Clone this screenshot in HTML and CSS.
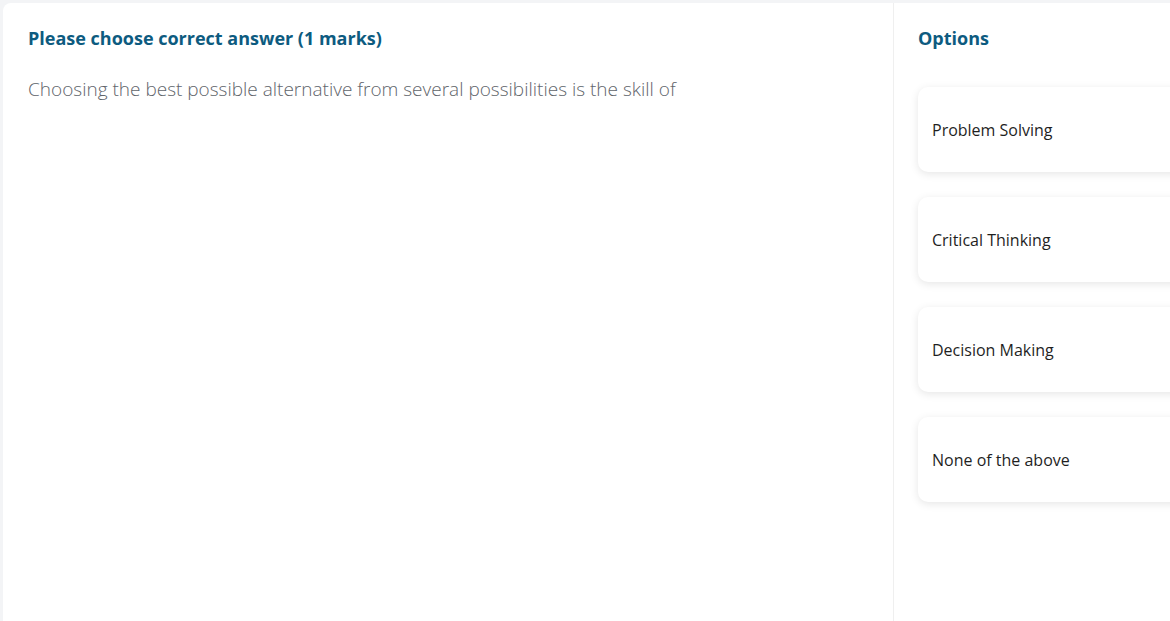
FILE: index.html
```html
<!doctype html>
<html lang="en">
<head>
	<meta charset="UTF-8">
	<title>Question</title>
	<link rel="stylesheet" href="styles.css">
</head>
<body>
	<div class="card">
		<div class="question">
			<h3 class="title">Please choose correct answer (1 marks)</h3>
			<p class="text">Choosing the best possible alternative from several possibilities is the skill of</p>
		</div>
		<div class="options">
			<h3 class="title">Options</h3>
			<div class="option-list">
				<div class="option">Problem Solving</div>
				<div class="option">Critical Thinking</div>
				<div class="option">Decision Making</div>
				<div class="option">None of the above</div>
			</div>
		</div>
	</div>
</body>
</html>
```
FILE: styles.css
```css
*{
	padding:0;
	margin:0;
	box-sizing:border-box;
}
html,body{
	height:100%;
	overflow:hidden;
}
body{
	background:#f3f4f6;
	font-family:"Open Sans", "Noto Sans", sans-serif;
}
.card{
	display:flex;
	width:1300px;
	height:680px;
	margin:3px 0 0 3px;
	background:#fff;
	border-radius:8px;
}
.question{
	width:891px;
	padding:23px 25px;
	border-right:1px solid #efefef;
}
.title{
	font-size:18px;
	line-height:24px;
	font-weight:700;
	color:#0d5b80;
}
.text{
	margin-top:26px;
	font-size:19px;
	line-height:26px;
	font-weight:300;
	color:#5f656b;
}
.options{
	width:400px;
	padding:23px 24px;
}
.option-list{
	display:flex;
	flex-direction:column;
	gap:25px;
	margin-top:37px;
}
.option{
	height:85px;
	display:flex;
	align-items:center;
	padding:0 14px;
	background:#fff;
	border-radius:10px;
	box-shadow:0 2px 8px rgba(0,0,0,0.1);
	font-size:16px;
	color:#1f1f1f;
}
```
